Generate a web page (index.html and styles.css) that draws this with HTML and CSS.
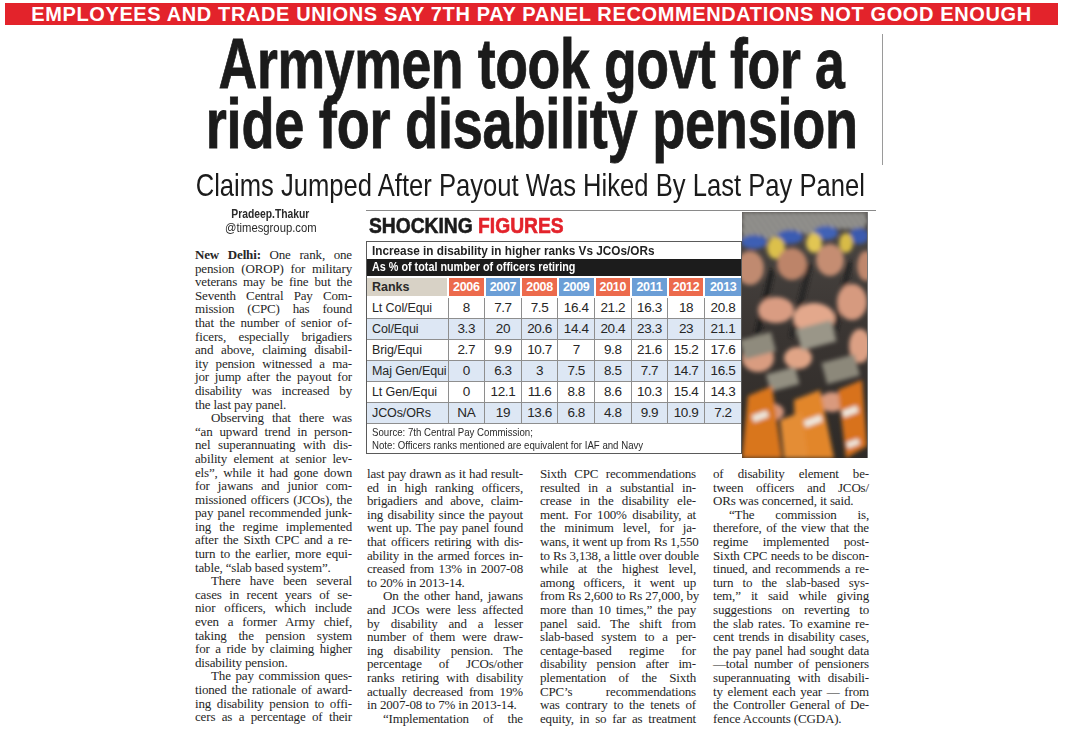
FILE: index.html
```html
<!DOCTYPE html>
<html lang="en">
<head>
<meta charset="utf-8">
<title>Armymen took govt for a ride for disability pension</title>
<link rel="stylesheet" href="styles.css">
</head>
<body>
<div class="banner">EMPLOYEES AND TRADE UNIONS SAY 7TH PAY PANEL RECOMMENDATIONS NOT GOOD ENOUGH</div>
<div class="story">
  <div class="headline">
    <h1><span class="hl"><span class="h1a">Armymen took govt for a</span></span><span class="hl"><span class="h1b">ride for disability pension</span></span></h1>
  </div>
  <h2 class="deck"><span class="deck-in">Claims Jumped After Payout Was Hiked By Last Pay Panel</span></h2>
  <div class="body">
    <div class="first">
      <div class="byline"><span class="by-name">Pradeep.Thakur</span><span class="by-mail">@timesgroup.com</span></div>
      <div class="txt">
        <p class="cont"><span><b>New Delhi:</b> One rank, one</span><span>pension (OROP) for military</span><span>veterans may be fine but the</span><span>Seventh Central Pay Com-</span><span>mission (CPC) has found</span><span>that the number of senior of-</span><span>ficers, especially brigadiers</span><span>and above, claiming disabil-</span><span>ity pension witnessed a ma-</span><span>jor jump after the payout for</span><span>disability was increased by</span><span>the last pay panel.</span></p>
        <p><span>Observing that there was</span><span>“an upward trend in person-</span><span>nel superannuating with dis-</span><span>ability element at senior lev-</span><span>els”, while it had gone down</span><span>for jawans and junior com-</span><span>missioned officers (JCOs), the</span><span>pay panel recommended junk-</span><span>ing the regime implemented</span><span>after the Sixth CPC and a re-</span><span>turn to the earlier, more equi-</span><span>table, “slab based system”.</span></p>
        <p><span>There have been several</span><span>cases in recent years of se-</span><span>nior officers, which include</span><span>even a former Army chief,</span><span>taking the pension system</span><span>for a ride by claiming higher</span><span>disability pension.</span></p>
        <p class="brk"><span>The pay commission ques-</span><span>tioned the rationale of award-</span><span>ing disability pension to offi-</span><span>cers as a percentage of their</span></p>
      </div>
    </div>
    <div class="right">
      <div class="graphic">
        <div class="chart">
          <div class="kicker"><span class="kick-in">SHOCKING <em>FIGURES</em></span></div>
          <div class="box">
            <div class="title"><span class="title-in">Increase in disability in higher ranks Vs JCOs/ORs</span></div>
            <div class="band"><span class="band-in">As % of total number of officers retiring</span></div>
            <table class="data">
              <colgroup><col class="rkc"><col><col><col><col><col><col><col><col></colgroup>
              <tr class="hd"><th class="rk">Ranks</th><th class="o">2006</th><th class="b">2007</th><th class="o">2008</th><th class="b">2009</th><th class="o">2010</th><th class="b">2011</th><th class="o">2012</th><th class="b">2013</th></tr>
              <tr><td>Lt Col/Equi</td><td>8</td><td>7.7</td><td>7.5</td><td>16.4</td><td>21.2</td><td>16.3</td><td>18</td><td>20.8</td></tr>
              <tr class="alt"><td>Col/Equi</td><td>3.3</td><td>20</td><td>20.6</td><td>14.4</td><td>20.4</td><td>23.3</td><td>23</td><td>21.1</td></tr>
              <tr><td>Brig/Equi</td><td>2.7</td><td>9.9</td><td>10.7</td><td>7</td><td>9.8</td><td>21.6</td><td>15.2</td><td>17.6</td></tr>
              <tr class="alt"><td>Maj Gen/Equi</td><td>0</td><td>6.3</td><td>3</td><td>7.5</td><td>8.5</td><td>7.7</td><td>14.7</td><td>16.5</td></tr>
              <tr><td>Lt Gen/Equi</td><td>0</td><td>12.1</td><td>11.6</td><td>8.8</td><td>8.6</td><td>10.3</td><td>15.4</td><td>14.3</td></tr>
              <tr class="alt"><td>JCOs/ORs</td><td>NA</td><td>19</td><td>13.6</td><td>6.8</td><td>4.8</td><td>9.9</td><td>10.9</td><td>7.2</td></tr>
            </table>
            <div class="notes"><span class="note-in">Source: 7th Central Pay Commission;</span><span class="note-in">Note: Officers ranks mentioned are equivalent for IAF and Navy</span></div>
          </div>
        </div>
        <div class="photo">
          <svg viewBox="0 0 125 246" width="125" height="246" preserveAspectRatio="none" aria-hidden="true">
            <defs>
              <pattern id="stripe" width="5" height="5" patternUnits="userSpaceOnUse" patternTransform="rotate(-35)"><rect width="5" height="5" fill="#232325"/><rect width="2.2" height="5" fill="#dcdad4"/></pattern>
              <filter id="soft" x="-10%" y="-10%" width="120%" height="120%"><feGaussianBlur stdDeviation="2"/></filter>
              <linearGradient id="bg" x1="0" y1="0" x2="0" y2="1"><stop offset="0" stop-color="#4b4744"/><stop offset="0.5" stop-color="#3a3532"/><stop offset="1" stop-color="#2e2a27"/></linearGradient>
            </defs>
            <rect width="125" height="246" fill="url(#bg)"/>
            <g filter="url(#soft)">
              <path d="M0 0H125V14C110 22 96 12 82 20C66 28 52 14 36 24C22 32 10 22 0 28Z" fill="url(#stripe)"/>
              <ellipse cx="12" cy="30" rx="13" ry="7" fill="#3e5fb4"/>
              <ellipse cx="48" cy="25" rx="13" ry="7" fill="#3b5cb2"/>
              <ellipse cx="84" cy="21" rx="12" ry="7" fill="#4162b6"/>
              <ellipse cx="117" cy="24" rx="10" ry="8" fill="#3a5aae"/>
              <ellipse cx="34" cy="36" rx="9" ry="11" fill="#dcc04c"/>
              <ellipse cx="72" cy="31" rx="8" ry="10" fill="#e2c652"/>
              <ellipse cx="104" cy="31" rx="7" ry="10" fill="#d8bb46"/>
              <ellipse cx="8" cy="56" rx="14" ry="17" fill="#c08a70"/>
              <ellipse cx="50" cy="52" rx="15" ry="16" fill="#bd8469"/>
              <ellipse cx="88" cy="48" rx="14" ry="16" fill="#c58d72"/>
              <ellipse cx="124" cy="54" rx="9" ry="15" fill="#bf876d"/>
              <path d="M30 58L14 128" stroke="#1f1f1f" stroke-width="5"/>
              <path d="M68 52L50 125" stroke="#232323" stroke-width="5"/>
              <path d="M108 50L92 120" stroke="#202020" stroke-width="5"/>
              <ellipse cx="34" cy="98" rx="18" ry="13" fill="#d99c82"/>
              <ellipse cx="72" cy="106" rx="21" ry="15" fill="#e3a88c"/>
              <ellipse cx="110" cy="90" rx="15" ry="18" fill="#d69a7f"/>
              <ellipse cx="16" cy="146" rx="16" ry="14" fill="#d99c80"/>
              <ellipse cx="118" cy="134" rx="11" ry="17" fill="#dca084"/>
              <ellipse cx="56" cy="146" rx="14" ry="11" fill="#e0a486"/>
              <ellipse cx="90" cy="190" rx="13" ry="10" fill="#d99a7e"/>
              <ellipse cx="30" cy="200" rx="12" ry="9" fill="#d5957a"/>
              <rect x="0" y="124" width="32" height="20" fill="#8f8b7d" transform="rotate(-15 15 134)"/>
              <rect x="56" y="112" width="36" height="22" fill="#9a9688" transform="rotate(-15 75 122)"/>
              <rect x="82" y="146" width="34" height="22" fill="#8c887a" transform="rotate(-15 100 158)"/>
              <rect x="26" y="158" width="30" height="18" fill="#938f81" transform="rotate(-15 42 168)"/>
              <path d="M6 184L30 174L40 246L0 246Z" fill="#d9761f"/>
              <path d="M52 188L78 178L92 246L54 246Z" fill="#e2862c"/>
              <path d="M96 178L120 168L125 234L104 246Z" fill="#d8721e"/>
              <path d="M38 208L60 200L66 246L42 246Z" fill="#e48d36"/>
              <rect x="62" y="206" width="18" height="7" fill="#efe9df" transform="rotate(-20 70 209)"/>
              <rect x="10" y="200" width="16" height="7" fill="#ede7dd" transform="rotate(-20 20 203)"/>
              <rect x="100" y="196" width="16" height="7" fill="#efe9df" transform="rotate(-20 108 199)"/>
              <rect x="104" y="228" width="13" height="6" fill="#efe9df" transform="rotate(-20 112 230)"/>
            </g>
          </svg>
        </div>
      </div>
      <div class="cols">
        <div class="txt">
          <p class="cont"><span>last pay drawn as it had result-</span><span>ed in high ranking officers,</span><span>brigadiers and above, claim-</span><span>ing disability since the payout</span><span>went up. The pay panel found</span><span>that officers retiring with dis-</span><span>ability in the armed forces in-</span><span>creased from 13% in 2007-08</span><span>to 20% in 2013-14.</span></p>
          <p><span>On the other hand, jawans</span><span>and JCOs were less affected</span><span>by disability and a lesser</span><span>number of them were draw-</span><span>ing disability pension. The</span><span>percentage of JCOs/other</span><span>ranks retiring with disability</span><span>actually decreased from 19%</span><span>in 2007-08 to 7% in 2013-14.</span></p>
          <p class="brk"><span>“Implementation of the</span></p>
        </div>
        <div class="txt">
          <p class="cont brk"><span>Sixth CPC recommendations</span><span>resulted in a substantial in-</span><span>crease in the disability ele-</span><span>ment. For 100% disability, at</span><span>the minimum level, for ja-</span><span>wans, it went up from Rs 1,550</span><span>to Rs 3,138, a little over double</span><span>while at the highest level,</span><span>among officers, it went up</span><span>from Rs 2,600 to Rs 27,000, by</span><span>more than 10 times,” the pay</span><span>panel said. The shift from</span><span>slab-based system to a per-</span><span>centage-based regime for</span><span>disability pension after im-</span><span>plementation of the Sixth</span><span>CPC’s recommendations</span><span>was contrary to the tenets of</span><span>equity, in so far as treatment</span></p>
        </div>
        <div class="txt">
          <p class="cont"><span>of disability element be-</span><span>tween officers and JCOs/</span><span>ORs was concerned, it said.</span></p>
          <p><span>“The commission is,</span><span>therefore, of the view that the</span><span>regime implemented post-</span><span>Sixth CPC needs to be discon-</span><span>tinued, and recommends a re-</span><span>turn to the slab-based sys-</span><span>tem,” it said while giving</span><span>suggestions on reverting to</span><span>the slab rates. To examine re-</span><span>cent trends in disability cases,</span><span>the pay panel had sought data</span><span>—total number of pensioners</span><span>superannuating with disabili-</span><span>ty element each year — from</span><span>the Controller General of De-</span><span>fence Accounts (CGDA).</span></p>
        </div>
      </div>
    </div>
  </div>
</div>
</body>
</html>
```

FILE: styles.css
```css
html, body {
  margin: 0;
  padding: 0;
  background: #ffffff;
}

body {
  width: 1065px;
  height: 736px;
  overflow: hidden;
  font-family: "Liberation Serif", "Times New Roman", serif;
  color: #232323;
}

.banner {
  margin: 3px 7px 0 5px;
  height: 22px;
  background: #e3232b;
  color: #ffffff;
  font-family: "Liberation Sans", Arial, sans-serif;
  font-weight: bold;
  font-size: 20px;
  line-height: 22px;
  letter-spacing: 0.62px;
  text-align: center;
  white-space: nowrap;
}

.story {
  margin-left: 195px;
  width: 681px;
}

.headline {
  margin-top: 11px;
  width: 673px;
  padding: 0 14px 9px 0;
  border-right: 1px solid #9a9a9a;
}

h1 {
  margin: -2px 0 2px 0;
  font-family: "Liberation Sans", Arial, sans-serif;
  font-weight: bold;
  font-size: 70px;
  line-height: 60px;
  color: #1b1b1b;
}

.hl {
  display: flex;
  justify-content: center;
  white-space: nowrap;
}

.hl > span {
  display: inline-block;
  transform-origin: center center;
  -webkit-text-stroke: 0.8px #1b1b1b;
}

.h1a { transform: scaleX(0.766); letter-spacing: -0.5px; }
.h1b { transform: scaleX(0.773); letter-spacing: -0.3px; }

.deck {
  margin: 3px 0 0 0;
  padding-right: 10px;
  display: flex;
  justify-content: center;
  font-family: "Liberation Sans", Arial, sans-serif;
  font-weight: normal;
  font-size: 32px;
  line-height: 34px;
  color: #1b1b1b;
  white-space: nowrap;
}

.deck-in {
  display: inline-block;
  transform: scaleX(0.80);
  transform-origin: center center;
}

.body {
  margin-top: 2px;
  display: grid;
  grid-template-columns: 157px 509px;
  column-gap: 15px;
  align-items: start;
}

.byline {
  margin-top: 3px;
  padding-right: 6px;
  display: flex;
  flex-direction: column;
  align-items: center;
  font-family: "Liberation Sans", Arial, sans-serif;
  font-size: 12px;
  line-height: 14px;
  color: #2a2a2a;
  white-space: nowrap;
}

.by-name {
  font-weight: bold;
  transform: scaleX(0.86);
}

.by-mail {
  transform: scaleX(0.94);
}

.txt {
  font-size: 13px;
  line-height: 13.6px;
  letter-spacing: -0.15px;
  color: #262626;
}

.first .txt {
  margin-top: 13px;
}

.txt p {
  margin: 0;
}

.txt p > span {
  display: block;
  white-space: nowrap;
  text-align: justify;
  text-align-last: justify;
}

.txt p > span:first-child {
  text-indent: 16px;
}

.txt p.cont > span:first-child {
  text-indent: 0;
}

.txt p > span:last-child {
  text-align-last: left;
}

.txt p.brk > span:last-child {
  text-align-last: justify;
}

.graphic {
  margin-top: 6px;
  margin-left: -1px;
  display: flex;
  border-top: 1px solid #8a8a8a;
}

.chart {
  width: 376px;
}

.kicker {
  height: 30px;
  padding-left: 3px;
  font-family: "Liberation Sans", Arial, sans-serif;
  font-weight: bold;
  font-size: 22px;
  line-height: 30px;
  color: #1b1b1b;
  white-space: nowrap;
}

.kick-in {
  display: inline-block;
  transform: scaleX(0.875);
  transform-origin: left center;
  -webkit-text-stroke: 0.6px currentColor;
}

.kicker em {
  font-style: normal;
  color: #e3232b;
}

.box {
  border: 1px solid #5a5a5a;
  font-family: "Liberation Sans", Arial, sans-serif;
}

.title {
  height: 17px;
  padding-left: 5px;
  font-weight: bold;
  font-size: 13px;
  line-height: 17px;
  color: #222;
  white-space: nowrap;
}

.title-in {
  display: inline-block;
  transform: scaleX(0.905);
  transform-origin: left center;
}

.band {
  height: 17px;
  padding-left: 5px;
  background: #1c1c1c;
  color: #ffffff;
  font-weight: bold;
  font-size: 12.5px;
  line-height: 17px;
  white-space: nowrap;
}

.band-in {
  display: inline-block;
  transform: scaleX(0.864);
  transform-origin: left center;
}

.data {
  width: 100%;
  border-collapse: collapse;
  table-layout: fixed;
}

.data col.rkc {
  width: 81px;
}

.data th {
  height: 18px;
  padding: 0;
  border: 2px solid #ffffff;
  color: #ffffff;
  font-weight: bold;
  font-size: 12.5px;
  line-height: 16px;
  letter-spacing: -0.3px;
  text-align: center;
}

.data th.rk {
  border-left: 0;
  background: #d8d2c6;
  color: #2a2a2a;
  text-align: left;
  padding-left: 5px;
  letter-spacing: 0;
}

.data th.o { background: #ec6a4c; }
.data th.b { background: #6b9ed6; }
.data th:last-child { border-right: 0; }

.data td {
  height: 20px;
  padding: 0;
  border: 1px solid #8e8e8e;
  font-size: 13.5px;
  line-height: 18px;
  letter-spacing: -0.4px;
  text-align: center;
  color: #262626;
  white-space: nowrap;
}

.data td:first-child {
  border-left: 0;
  text-align: left;
  padding-left: 5px;
  font-size: 12.5px;
  letter-spacing: -0.1px;
}

.data td:last-child {
  border-right: 0;
}

.data tr.alt td {
  background: #dde7f4;
}

.notes {
  padding: 2px 5px 1px;
  display: flex;
  flex-direction: column;
  align-items: flex-start;
  font-size: 11px;
  line-height: 13px;
  color: #2a2a2a;
  white-space: nowrap;
}

.note-in {
  transform: scaleX(0.877);
  transform-origin: left center;
}

.photo {
  width: 125px;
  height: 246px;
  margin-top: 1px;
  border-right: 1px solid #777777;
}

.photo svg {
  display: block;
}

.cols {
  margin-top: 9px;
  display: grid;
  grid-template-columns: repeat(3, 156px);
  column-gap: 17px;
}
```
